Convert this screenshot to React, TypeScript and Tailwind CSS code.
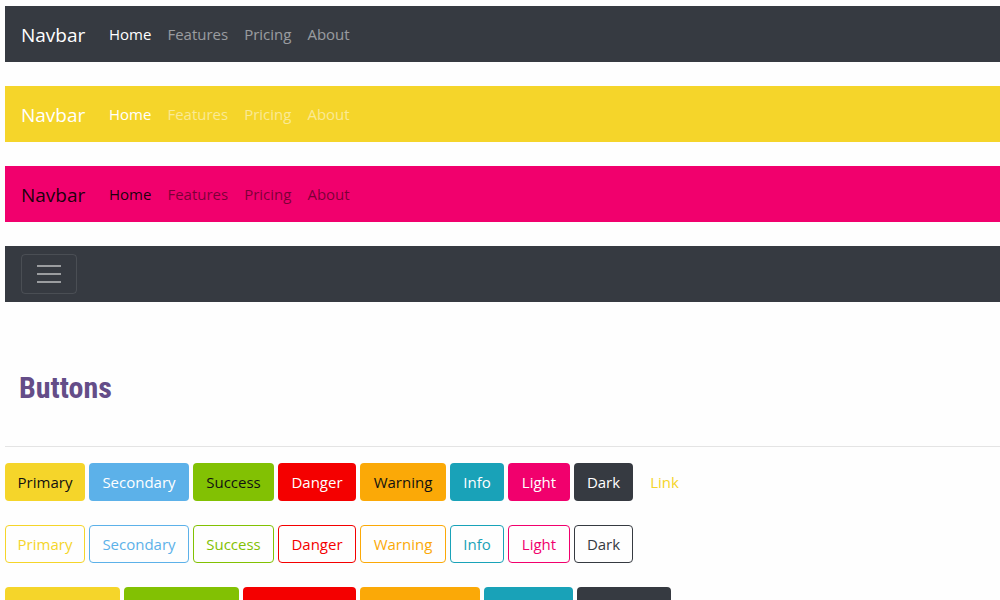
type NavTheme = {
  id: string;
  bar: string;
  strong: string;
  muted: string;
};

const navThemes: NavTheme[] = [
  { id: "dark", bar: "bg-[#363a41]", strong: "text-white", muted: "text-white/50" },
  { id: "primary", bar: "bg-[#f5d52a]", strong: "text-white", muted: "text-white/50" },
  { id: "light", bar: "bg-[#f1006d]", strong: "text-black/90", muted: "text-black/50" },
];

const navLinks = ["Features", "Pricing", "About"];

const solidButtons = [
  { label: "Primary", style: "w-20 bg-[#f5d52a] text-[#111111]" },
  { label: "Secondary", style: "w-25 bg-[#5cb1e9] text-white" },
  { label: "Success", style: "w-[81px] bg-[#82c103] text-[#111111]" },
  { label: "Danger", style: "w-[78px] bg-[#f40000] text-white" },
  { label: "Warning", style: "w-[86px] bg-[#fba907] text-[#111111]" },
  { label: "Info", style: "w-[54px] bg-[#19a2b8] text-white" },
  { label: "Light", style: "w-[62px] bg-[#f1006d] text-white" },
  { label: "Dark", style: "w-[59px] bg-[#363a41] text-white" },
  { label: "Link", style: "w-[55px] text-[#f5d52a]" },
];

const outlineButtons = [
  { label: "Primary", style: "w-20 border-[#f5d52a] text-[#f5d52a]" },
  { label: "Secondary", style: "w-25 border-[#5cb1e9] text-[#5cb1e9]" },
  { label: "Success", style: "w-[81px] border-[#82c103] text-[#82c103]" },
  { label: "Danger", style: "w-[78px] border-[#f40000] text-[#f40000]" },
  { label: "Warning", style: "w-[86px] border-[#fba907] text-[#fba907]" },
  { label: "Info", style: "w-[54px] border-[#19a2b8] text-[#19a2b8]" },
  { label: "Light", style: "w-[62px] border-[#f1006d] text-[#f1006d]" },
  { label: "Dark", style: "w-[59px] border-[#363a41] text-[#363a41]" },
];

const menuButtons = [
  { label: "Primary", style: "w-[115px] bg-[#f5d52a] text-[#111111]" },
  { label: "Success", style: "w-[115px] bg-[#82c103] text-[#111111]" },
  { label: "Danger", style: "w-[113px] bg-[#f40000] text-white" },
  { label: "Warning", style: "w-30 bg-[#fba907] text-[#111111]" },
  { label: "Info", style: "w-[89px] bg-[#19a2b8] text-white" },
  { label: "Dark", style: "w-[94px] bg-[#363a41] text-white" },
];

const buttonBase =
  "flex items-center justify-center rounded border text-[15px] leading-5 whitespace-nowrap";

const variants = {
  solid: "h-[38px] border-transparent",
  outline: "h-[38px]",
  menu: "h-12 border-transparent",
};

function Navbar({ theme }: { theme: NavTheme }) {
  return (
    <nav aria-label={theme.id} className={`flex h-14 items-center px-4 ${theme.bar}`}>
      <a href="#" className={`w-20 pt-px text-[19px] leading-7 ${theme.strong}`}>
        Navbar
      </a>
      <ul className="flex text-[15px] leading-6">
        <li>
          <a href="#" aria-current="page" className={`block px-2 ${theme.strong}`}>
            Home
          </a>
        </li>
        {navLinks.map((label) => (
          <li key={label}>
            <a href="#" className={`block px-2 ${theme.muted}`}>
              {label}
            </a>
          </li>
        ))}
      </ul>
    </nav>
  );
}

function ButtonRow({
  items,
  variant,
}: {
  items: { label: string; style: string }[];
  variant: keyof typeof variants;
}) {
  return (
    <div className="flex flex-wrap gap-1">
      {items.map(({ label, style }) => (
        <button
          key={label}
          type="button"
          className={`${buttonBase} ${variants[variant]} ${style}`}
        >
          {label}
          {variant === "menu" && (
            <span
              aria-hidden="true"
              className="ml-4 border-x-4 border-t-4 border-x-transparent border-t-current"
            />
          )}
        </button>
      ))}
    </div>
  );
}

export default function App() {
  return (
    <main className="min-h-screen bg-[#fefefe] pt-1.5 pl-[5px] font-['Open_Sans','Noto_Sans',sans-serif]">
      <div className="flex flex-col gap-6">
        {navThemes.map((theme) => (
          <Navbar key={theme.id} theme={theme} />
        ))}
        <nav aria-label="Collapsed" className="flex h-14 items-center bg-[#363a41] px-4">
          <button
            type="button"
            aria-label="Toggle navigation"
            className="flex h-10 w-14 items-center justify-center rounded border border-white/10 text-white/50"
          >
            <svg
              viewBox="0 0 30 30"
              className="size-[30px]"
              fill="none"
              stroke="currentColor"
              strokeWidth="2"
            >
              <path d="M3 7h24M3 15h24M3 23h24" />
            </svg>
          </button>
        </nav>
      </div>

      <h2 className="px-3.5 pt-[66px] pb-[38px] font-['Liberation_Sans_Narrow','Roboto_Condensed',sans-serif] text-[30px] leading-10 font-bold text-[#644d88]">
        Buttons
      </h2>
      <hr className="border-[#e4e4e4]" />

      <section aria-label="Buttons" className="flex flex-col gap-6 pt-4 pb-6">
        <ButtonRow items={solidButtons} variant="solid" />
        <ButtonRow items={outlineButtons} variant="outline" />
        <ButtonRow items={menuButtons} variant="menu" />
      </section>
    </main>
  );
}
